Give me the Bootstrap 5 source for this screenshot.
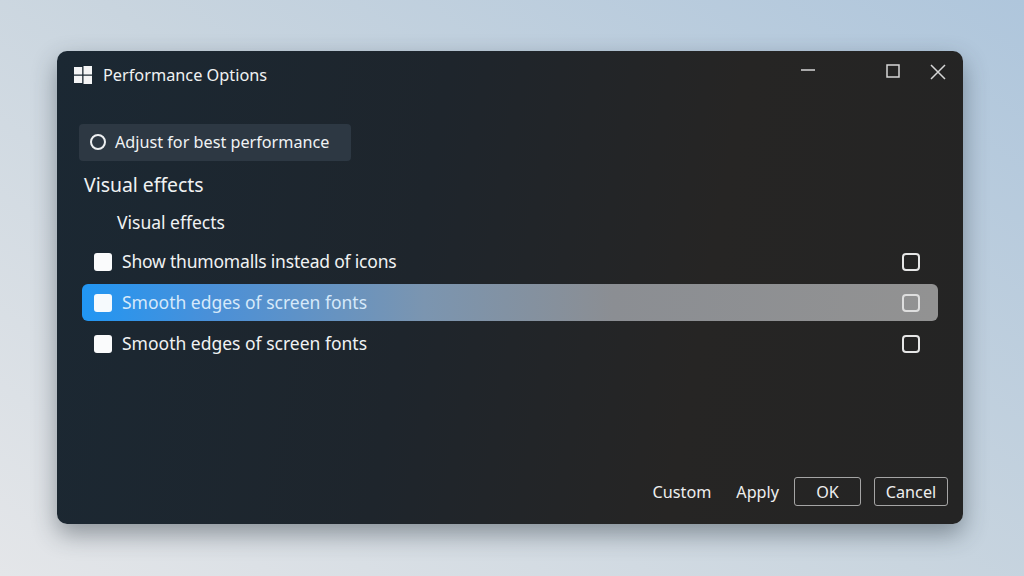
<!DOCTYPE html>
<html lang="en">
<head>
  <meta charset="UTF-8">
  <meta name="viewport" content="width=device-width, initial-scale=1">
  <title>Performance Options</title>
  <link href="https://cdn.jsdelivr.net/npm/bootstrap@5.3.0/dist/css/bootstrap.min.css" rel="stylesheet">
  <style>
    html, body { height: 100%; }
    body {
      overflow: hidden;
      font-family: "Noto Sans", "Open Sans", sans-serif;
      background: linear-gradient(35deg, #e4e6e9 0%, #c9d5df 50%, #afc6dc 100%);
      color: #f0f2f3;
      padding: 51px 61px 52px 57px;
    }
    .win {
      width: 906px;
      height: 473px;
      border-radius: 10px;
      background: linear-gradient(100deg, #1b2833 0%, #1e252c 40%, #262524 70%, #242424 100%);
      box-shadow: 0 10px 24px rgba(40, 50, 60, .45);
    }
    .win-title { height: 48px; padding: 0 3px 0 17px; }
    .win-title .ttl { font-size: 16.3px; margin-left: 11px; margin-top: 1px; }
    .ctl-group { margin-top: -6px; }
    .ctl { width: 45px; display: flex; justify-content: center; }
    .ctl-min { margin-right: 40px; }
    .win-body { padding: 25px 25px 0 22px; }
    .radio-box {
      width: 272px;
      height: 37px;
      padding-left: 11px;
      background: #2d3843;
      border-radius: 4px;
      font-size: 16.2px;
      gap: 9px;
    }
    .radio-dot { width: 16px; height: 16px; border: 2px solid #eef0f2; border-radius: 50%; margin-top: -1px; }
    .sec-h { font-size: 19.4px; margin: 10px 0 0 5px; line-height: 27px; }
    .sec-sub { font-size: 17.5px; margin: 12px 0 0 38px; line-height: 24px; }
    .fx-list { margin: 9px 0 0 3px; width: 856px; }
    .fx-row {
      height: 37px;
      margin-bottom: 4px;
      padding: 0 18px 0 12px;
      border-radius: 6px;
      font-size: 17.5px;
    }
    .fx-row .tight { letter-spacing: -.2px; }
    .fx-row.on {
      background: linear-gradient(90deg, #2196f3 0%, #4a90d8 15%, #7b95b0 40%, #8b8e93 62%, #929292 100%);
      color: #d6e9fa;
    }
    .fill-box { width: 18px; height: 18px; background: #fafbfc; border-radius: 3px; margin-right: 10px; }
    .on .fill-box { background: #f6fafd; }
    .line-box { width: 18px; height: 18px; border: 2px solid #e6e6e6; border-radius: 4px; }
    .on .line-box { border-color: #dedede; }
    .win-foot { padding: 0 15px 18px 0; }
    .foot-txt { font-size: 16.2px; color: #eeeeee; padding-top: 2px; }
    .foot-txt.cst { margin-right: 25px; }
    .foot-txt.apl { margin-right: 15px; }
    .foot-btn {
      height: 29px;
      border: 1.5px solid #a5a5a5;
      border-radius: 3px;
      font-size: 16.2px;
      color: #eeeeee;
      background: transparent;
      padding: 1px 0 0;
    }
    .ok-btn { width: 67px; margin-right: 13px; }
    .cancel-btn { width: 74px; }
  </style>
</head>
<body>
  <div class="win d-flex flex-column">
    <div class="win-title d-flex align-items-center">
      <svg width="18" height="18" viewBox="0 0 18 18"><path fill="#f4f5f6" d="M0 1h8.2v7.4H0zM9.5 0H18v8.4H9.5zM0 9.7h8.2V17H0zM9.5 9.7H18V18H9.5z"/></svg>
      <span class="ttl">Performance Options</span>
      <div class="ctl-group ms-auto d-flex">
        <div class="ctl ctl-min"><svg width="14" height="14" viewBox="0 0 14 14"><path d="M0 6h14" stroke="#d6d6d6" stroke-width="1.5"/></svg></div>
        <div class="ctl"><svg width="14" height="14" viewBox="0 0 14 14"><path d="M1 1h12v12H1z" fill="none" stroke="#d6d6d6" stroke-width="1.5"/></svg></div>
        <div class="ctl"><svg width="16" height="16" viewBox="0 0 16 16"><path d="M1 1l14 14M15 1 1 15" stroke="#d6d6d6" stroke-width="1.5"/></svg></div>
      </div>
    </div>

    <div class="win-body flex-grow-1">
      <div class="radio-box d-flex align-items-center">
        <span class="radio-dot"></span>
        <span>Adjust for best performance</span>
      </div>
      <div class="sec-h">Visual effects</div>
      <div class="sec-sub">Visual effects</div>
      <div class="fx-list">
        <div class="fx-row d-flex align-items-center">
          <span class="fill-box"></span><span class="tight">Show thumomalls instead of icons</span><span class="line-box ms-auto"></span>
        </div>
        <div class="fx-row on d-flex align-items-center">
          <span class="fill-box"></span><span>Smooth edges of screen fonts</span><span class="line-box ms-auto"></span>
        </div>
        <div class="fx-row d-flex align-items-center">
          <span class="fill-box"></span><span>Smooth edges of screen fonts</span><span class="line-box ms-auto"></span>
        </div>
      </div>
    </div>

    <div class="win-foot d-flex justify-content-end align-items-center">
      <span class="foot-txt cst">Custom</span>
      <span class="foot-txt apl">Apply</span>
      <button type="button" class="btn foot-btn ok-btn">OK</button>
      <button type="button" class="btn foot-btn cancel-btn">Cancel</button>
    </div>
  </div>
  <script src="https://cdn.jsdelivr.net/npm/bootstrap@5.3.0/dist/js/bootstrap.bundle.min.js"></script>
</body>
</html>
